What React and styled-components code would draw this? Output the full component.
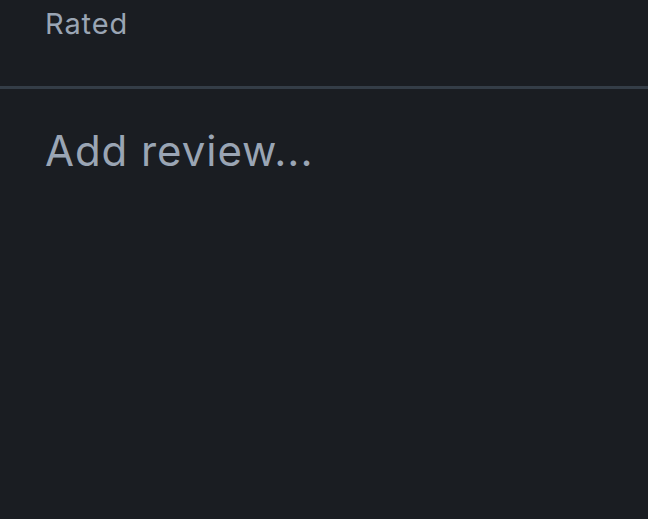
import React from 'react';
import styled, { createGlobalStyle } from 'styled-components';

const GlobalStyle = createGlobalStyle`
  html, body {
    margin: 0;
    padding: 0;
    background: #1a1d22;
  }
  body {
    font-family: Inter, "Noto Sans", sans-serif;
  }
`;

const Page = styled.div`
  width: 648px;
  height: 519px;
  background: #1a1d22;
  overflow: hidden;
`;

const Header = styled.div`
  height: 89px;
  padding: 0 45px;
  border-bottom: 3px solid #343d47;
  box-sizing: border-box;
`;

const Label = styled.div`
  color: #9aa5b4;
  font-size: 29px;
  letter-spacing: 0.9px;
  line-height: 1;
  padding-top: 9px;
`;

const Review = styled.textarea`
  display: block;
  width: 100%;
  height: 430px;
  box-sizing: border-box;
  padding: 37px 45px;
  background: transparent;
  border: none;
  outline: none;
  resize: none;
  color: #c9d1db;
  font-family: Inter, "Noto Sans", sans-serif;
  font-size: 42px;
  letter-spacing: 0.95px;
  line-height: 1.2;

  &::placeholder {
    color: #9aa5b4;
  }
`;

const App = () => {
    return (
        <Page>
            <GlobalStyle />
            <Header>
                <Label>Rated</Label>
            </Header>
            <Review placeholder='Add review...' />
        </Page>
    )
}

export default App;
